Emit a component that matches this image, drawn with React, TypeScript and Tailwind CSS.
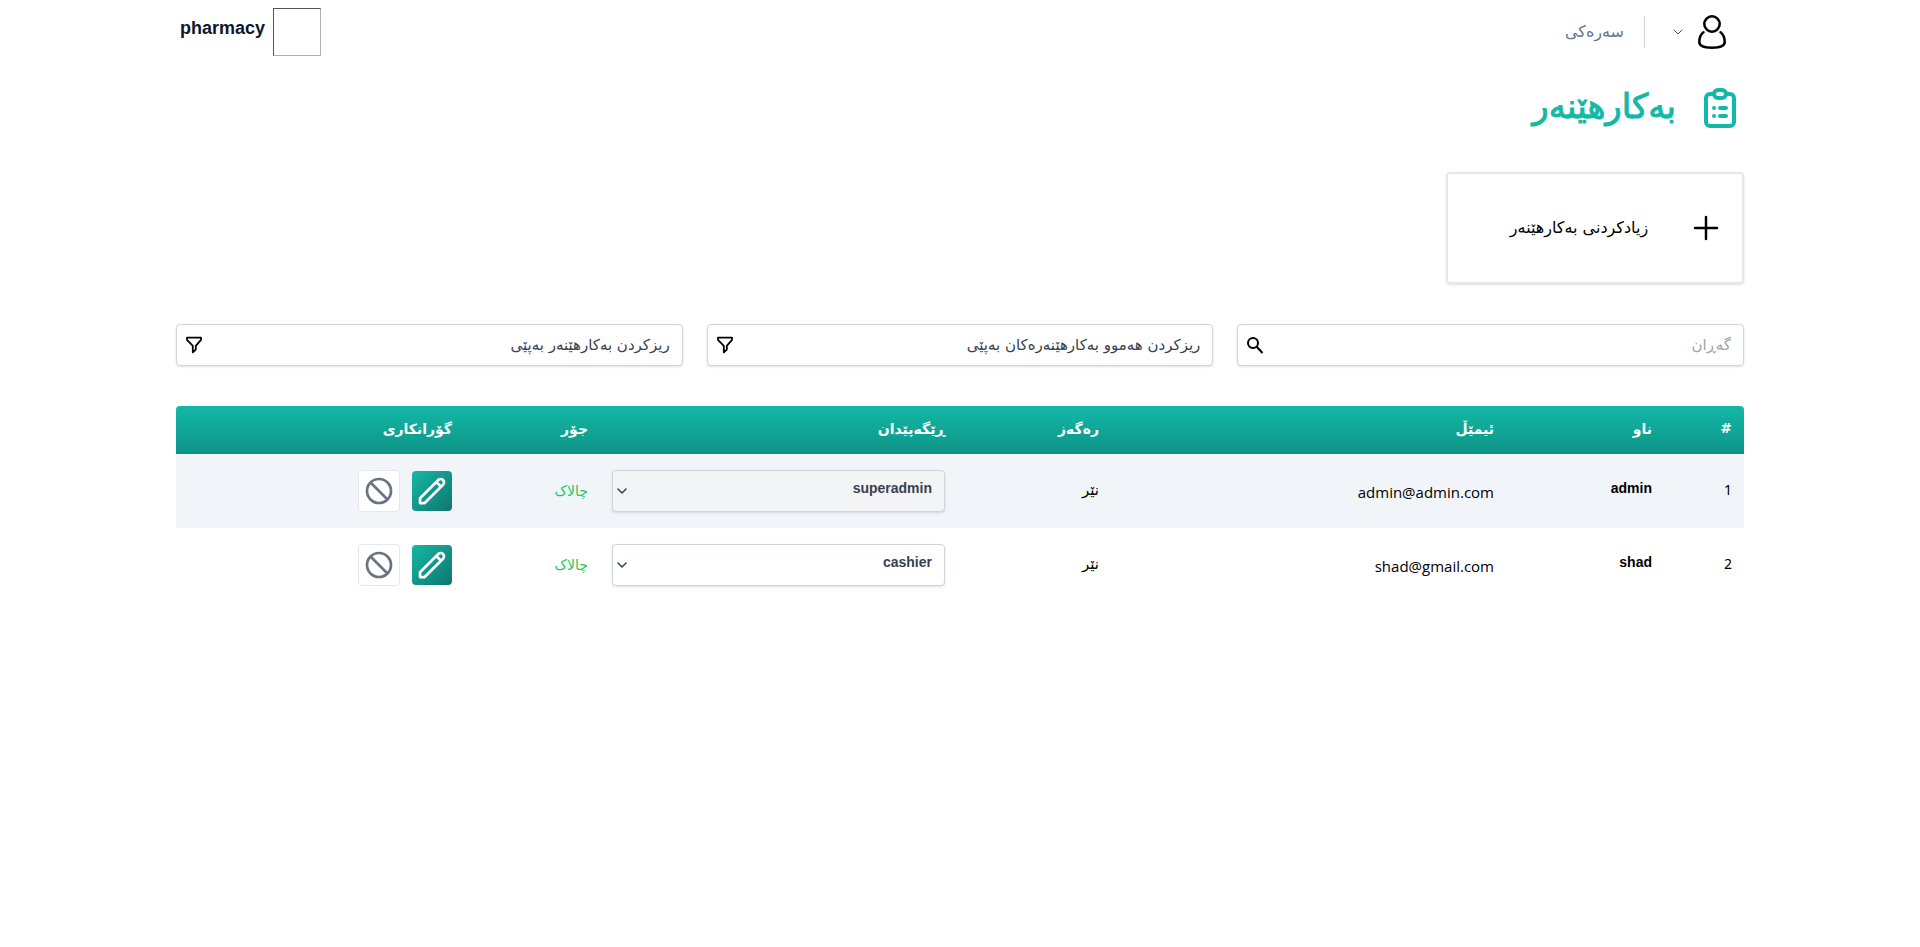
import React from "react";
import { HiOutlineClipboardList } from "react-icons/hi";

const users = [
  { id: 1, name: "admin", email: "admin@admin.com", role: "superadmin", locked: true },
  { id: 2, name: "shad", email: "shad@gmail.com", role: "cashier", locked: false },
];

const field =
  "h-[42px] w-full appearance-none rounded border border-[#d1d5db] bg-white ps-3 pe-10 shadow-sm text-[#374151]";

function Chevron({ className }: { className: string }) {
  return (
    <svg viewBox="0 0 10 6" fill="none" stroke="currentColor" className={className}>
      <path d="M1 1l4 4 4-4" strokeLinecap="round" strokeLinejoin="round" />
    </svg>
  );
}

function Funnel() {
  return (
    <svg viewBox="0 0 18 18" fill="none" stroke="black" className="pointer-events-none absolute left-[9px] top-3 size-[18px]">
      <path d="M2 1.700h14v2.200L10.800 9.800v3.700L7.800 16.400V9.800L2 3.900z" strokeWidth="1.800" strokeLinejoin="round" />
    </svg>
  );
}

function FilterSelect({ label }: { label: string }) {
  return (
    <div className="relative">
      <select aria-label={label} className={field + " text-[15px]"}>
        <option>{label}</option>
      </select>
      <Funnel />
    </div>
  );
}

export default function App() {
  return (
    <div dir="rtl" className="min-h-screen bg-white px-44 font-['DejaVu_Sans',sans-serif] text-black">
      <header className="flex h-16 items-center justify-between">
        <nav className="flex items-center">
          <button aria-label="هەژمار" className="flex items-center gap-[15px] ps-[18px]">
            <svg viewBox="0 0 28 34" fill="none" stroke="black" strokeWidth="2.500" className="h-[34px] w-7">
              <circle cx="14" cy="9" r="7.700" />
              <path d="M5.500 17.200C2.500 19.500 1.300 23 1.300 27c0 4 5.500 5.700 12.700 5.700s12.700-1.700 12.700-5.700c0-4-1.200-7.500-4.200-9.800" strokeLinecap="round" />
            </svg>
            <Chevron className="h-[6px] w-[10px] text-[#475569]" />
          </button>
          <span className="ms-7 h-8 w-px bg-[#cbd5e1]" />
          <a href="#" className="ms-5 text-base text-[#64748b]">سەرەکی</a>
        </nav>
        <a href="#" className="flex items-center gap-2 pe-1 font-['Liberation_Sans',sans-serif] text-lg font-bold text-[#0f172a]">
          <span className="size-12 border border-t-[#555] border-l-[#555] border-r-[#b0b0b0] border-b-[#b0b0b0]" />
          <span className="pb-2">pharmacy</span>
        </a>
      </header>

      <main>
        <h1 className="mt-5 flex h-12 items-center gap-5 text-[34px] text-[#14b8a6]">
          <HiOutlineClipboardList className="size-12" />
          <span className="pb-1 [-webkit-text-stroke:1px]">بەکارهێنەر</span>
        </h1>

        <button className="mt-10 flex h-28 w-[298px] items-center rounded border-2 border-[#e5e7eb] px-5 shadow-sm">
          <svg viewBox="0 0 32 32" fill="none" stroke="black" strokeWidth="2.500" strokeLinecap="round" className="size-8">
            <path d="M16 5v22M5 16h22" />
          </svg>
          <span className="flex-1 text-center text-base">زیادکردنی بەکارهێنەر</span>
        </button>

        <div className="mt-10 grid grid-cols-3 gap-6">
          <div className="relative">
            <input aria-label="گەڕان" placeholder="گەڕان" className={field + " text-[15px] placeholder:text-[#9ca3af]"} />
            <svg viewBox="0 0 18 18" fill="none" stroke="black" strokeWidth="2" className="pointer-events-none absolute left-[9px] top-3 size-[18px]">
              <circle cx="7" cy="7" r="5" />
              <path d="M10.500 10.500l6 6.500" />
            </svg>
          </div>
          <FilterSelect label="ریزکردن هەموو بەکارهێنەرەکان بەپێی" />
          <FilterSelect label="ریزکردن بەکارهێنەر بەپێی" />
        </div>

        <div className="mt-10 overflow-hidden rounded-t">
          <table className="w-full table-fixed text-right text-sm">
            <colgroup>
              <col className="w-[80px]" />
              <col className="w-[158px]" />
              <col className="w-[395px]" />
              <col className="w-[154px]" />
              <col className="w-[357px]" />
              <col className="w-[136px]" />
              <col className="w-[288px]" />
            </colgroup>
            <thead className="h-12 bg-[linear-gradient(to_bottom,#14b8a6,#0d9488)] text-white">
              <tr>
                {["#", "ناو", "ئیمێڵ", "رەگەز", "ڕێگەپێدان", "جۆر", "گۆرانکاری"].map((h) => (
                  <th key={h} className="px-3 pb-0.5 font-bold first:pb-1">{h}</th>
                ))}
              </tr>
            </thead>
            <tbody>
              {users.map((u) => (
                <tr key={u.id} className="h-[74px] odd:bg-[#f1f5f9]">
                  <td className="px-3 pb-0.5 font-['Noto_Sans',sans-serif]">{u.id}</td>
                  <td className="px-3 pb-1.5 font-['Liberation_Sans',sans-serif] font-bold">{u.name}</td>
                  <td className="px-3 pt-1 font-['Open_Sans',sans-serif] text-[15px]">{u.email}</td>
                  <td className="px-3 text-[15px]">نێر</td>
                  <td className="px-3">
                    <div className="relative">
                      <select
                        aria-label="ڕێگەپێدان"
                        disabled={u.locked}
                        className={field + " pb-1.5 font-['Liberation_Sans',sans-serif] text-sm font-bold opacity-100 disabled:bg-[#f3f4f6]"}
                      >
                        <option>{u.role}</option>
                      </select>
                      <Chevron className="pointer-events-none absolute left-[5px] top-[18px] h-[6px] w-[10px] stroke-[1.5] text-[#374151]" />
                    </div>
                  </td>
                  <td className="px-3 text-[#22c55e]">چالاک</td>
                  <td className="px-3">
                    <div className="flex items-center gap-3">
                      <button aria-label="دەستکاری" className="flex size-10 items-center justify-center rounded bg-[linear-gradient(to_bottom_right,#14b8a6,#0f766e)] text-white">
                        <svg viewBox="0 0 24 24" fill="none" stroke="currentColor" strokeWidth="2" className="size-8">
                          <path d="M15.232 5.232l3.536 3.536m-2.036-5.036a2.500 2.500 0 113.536 3.536L6.500 21.036H3v-3.572L16.732 3.732z" strokeLinecap="round" strokeLinejoin="round" />
                        </svg>
                      </button>
                      <button aria-label="ڕاگرتن" className="flex size-[42px] items-center justify-center rounded border border-[#e5e7eb] bg-white text-[#6b7280]">
                        <svg viewBox="0 0 24 24" fill="none" stroke="currentColor" strokeWidth="2" className="size-8">
                          <path d="M18.364 18.364A9 9 0 005.636 5.636m12.728 12.728A9 9 0 015.636 5.636m12.728 12.728L5.636 5.636" />
                        </svg>
                      </button>
                    </div>
                  </td>
                </tr>
              ))}
            </tbody>
          </table>
        </div>
      </main>
    </div>
  );
}
